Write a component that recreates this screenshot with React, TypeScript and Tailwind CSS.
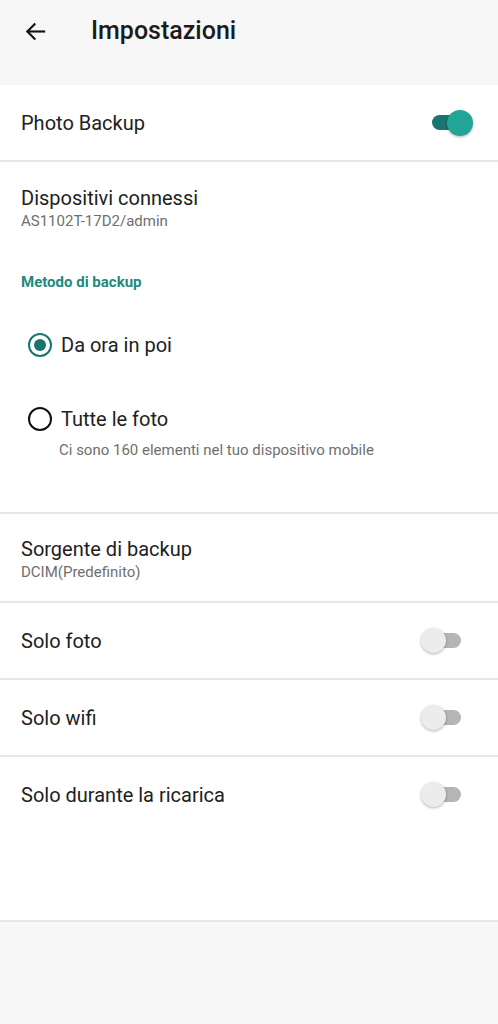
import { ReactNode } from 'react'

function Toggle({ on }: { on: boolean }) {
  if (on) {
    return (
      <div className="relative w-[42px] h-[26px] flex items-center">
        <div className="ml-[1px] h-[15px] w-[34px] rounded-full bg-[#17766d]" />
        <div className="absolute right-0 top-0 h-[26px] w-[26px] rounded-full bg-[#21a596] shadow-[0_1px_3px_rgba(0,0,0,0.3)]" />
      </div>
    )
  }
  return (
    <div className="relative mr-[10px] w-[42px] h-[26px] flex items-center">
      <div className="ml-[6px] h-[15px] w-[34px] rounded-full bg-[#b5b5b5]" />
      <div className="absolute left-0 top-0 h-[25px] w-[25px] rounded-full bg-[#ececec] shadow-[0_1px_3px_rgba(0,0,0,0.3)]" />
    </div>
  )
}

function Radio({ checked }: { checked: boolean }) {
  return (
    <div
      className={`h-[24px] w-[24px] rounded-full border-[2.5px] flex items-center justify-center ${
        checked ? 'border-[#17766d]' : 'border-[#111]'
      }`}
    >
      {checked && <div className="h-[12px] w-[12px] rounded-full bg-[#17766d]" />}
    </div>
  )
}

function Divider() {
  return <div className="h-[2px] bg-[#e6e6e6]" />
}

function SwitchRow({ label, on }: { label: string; on?: boolean }) {
  return (
    <div className="h-[75px] flex items-center justify-between pl-[21px] pr-[25px]">
      <span className="text-[20px] text-[#212121]">{label}</span>
      <Toggle on={!!on} />
    </div>
  )
}

function Titled({ title, sub, children }: { title: string; sub: string; children?: ReactNode }) {
  return (
    <div className="px-[21px]">
      <div className="text-[20px] leading-[24px] text-[#212121]">{title}</div>
      <div className="mt-[2px] text-[15px] leading-[18px] text-[#6f6f6f]">{sub}</div>
      {children}
    </div>
  )
}

export default function App() {
  return (
    <div className="min-h-[1024px] bg-[#f7f7f7] font-['Roboto',sans-serif]">
      <div className="h-[85px] flex items-start pt-[17px]">
        <div className="flex items-center h-[28px]">
          <svg className="ml-[24px]" width="23" height="23" viewBox="0 0 24 24" fill="none" stroke="#111" strokeWidth="2.2" strokeLinecap="square">
            <path d="M21 12H4" />
            <path d="M11 4.5L3.5 12L11 19.5" />
          </svg>
          <h1 className="ml-[44px] text-[25px] font-medium text-[#1b1b1b]">Impostazioni</h1>
        </div>
      </div>

      <div className="bg-white">
        <SwitchRow label="Photo Backup" on />
        <Divider />

        <div className="pt-[24px] pb-[53px]">
          <Titled title="Dispositivi connessi" sub="AS1102T-17D2/admin">
            <div className="mt-[43px] text-[15px] leading-[18px] font-bold text-[#1f8a7c]">Metodo di backup</div>
          </Titled>

          <div className="mt-[34px] pl-[28px] h-[40px] flex items-center gap-[9px]">
            <Radio checked />
            <span className="text-[20px] text-[#212121]">Da ora in poi</span>
          </div>
          <div className="mt-[34px] pl-[28px] h-[40px] flex items-center gap-[9px]">
            <Radio checked={false} />
            <span className="text-[20px] text-[#212121]">Tutte le foto</span>
          </div>
          <div className="mt-[2px] pl-[59px] text-[15px] leading-[18px] text-[#6f6f6f]">
            Ci sono 160 elementi nel tuo dispositivo mobile
          </div>
        </div>
        <Divider />

        <div className="pt-[23px] pb-[20px]">
          <Titled title="Sorgente di backup" sub="DCIM(Predefinito)" />
        </div>
        <Divider />

        <SwitchRow label="Solo foto" />
        <Divider />
        <SwitchRow label="Solo wifi" />
        <Divider />
        <SwitchRow label="Solo durante la ricarica" />
        <div className="h-[88px]" />
        <Divider />
      </div>
    </div>
  )
}
